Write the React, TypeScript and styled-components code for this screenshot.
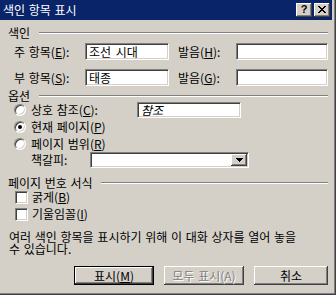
import React from "react";
import styled, { createGlobalStyle } from "styled-components";

const Global = createGlobalStyle`
  html, body { margin: 0; padding: 0; background: #d4d0c8; }
  body {
    font-family: "Noto Sans CJK KR", "Noto Sans", sans-serif;
    font-size: 12px;
    color: #000;
  }
`;

const Frame = styled.div`
  width: 336px;
  height: 295px;
  box-sizing: border-box;
  border-right: 1px solid #404040;
  border-bottom: 1px solid #404040;
  background: #d4d0c8;
`;

const Inner = styled.div`
  height: 100%;
  box-sizing: border-box;
  border-right: 1px solid #808080;
  border-bottom: 1px solid #808080;
  padding: 0 2px 2px 0;
  display: flex;
  flex-direction: column;
`;

const TitleBar = styled.div`
  height: 20px;
  flex: none;
  background: #0a246a;
  display: flex;
  align-items: center;
  padding: 0 2px 0 3px;
  color: #fff;
`;

const Title = styled.div`
  flex: 1;
  font-size: 12px;
  line-height: 14px;
  word-spacing: 1px;
`;

const CapBtn = styled.div<{ $gap?: number }>`
  width: 16px;
  height: 14px;
  box-sizing: border-box;
  margin-left: ${(p) => p.$gap ?? 0}px;
  background: #d4d0c8;
  box-shadow: inset -1px -1px #404040, inset 1px 1px #fff, inset -2px -2px #808080;
  display: flex;
  align-items: center;
  justify-content: center;
  color: #000;
  font-family: "Liberation Sans", Arial, sans-serif;
  font-weight: bold;
  font-size: 11px;
  line-height: 11px;
  padding-bottom: 1px;
`;

const Body = styled.div`
  flex: 1;
  display: flex;
  flex-direction: column;
  padding: 0 4px 0 8px;
`;

const GroupHead = styled.div<{ $top: number; $h: number }>`
  display: flex;
  align-items: center;
  height: ${(p) => p.$h}px;
  margin-top: ${(p) => p.$top}px;
  line-height: 12px;
  word-spacing: 1px;
  white-space: nowrap;
`;

const GroupLine = styled.div<{ $gap: number }>`
  flex: 1;
  height: 0;
  margin-left: ${(p) => p.$gap}px;
  border-top: 1px solid #808080;
  border-bottom: 1px solid #fff;
`;

const FieldRow = styled.div<{ $top: number }>`
  display: flex;
  align-items: center;
  height: 17px;
  margin-top: ${(p) => p.$top}px;
  padding-left: 6px;
  white-space: nowrap;
`;

const Label = styled.div<{ $w: number; $ml?: number }>`
  width: ${(p) => p.$w}px;
  margin-left: ${(p) => p.$ml ?? 0}px;
  flex: none;
  line-height: 12px;
  word-spacing: 1px;
`;

const TextBox = styled.div<{ $w: number; $h?: number; $italic?: boolean }>`
  width: ${(p) => p.$w}px;
  height: ${(p) => p.$h ?? 17}px;
  flex: none;
  box-sizing: border-box;
  background: #fff;
  border: 1px solid;
  border-color: #808080 #fff #fff #808080;
  box-shadow: inset 1px 1px #404040, inset -1px -1px #d4d0c8;
  padding: 0 3px;
  display: flex;
  align-items: center;
  line-height: 12px;
  word-spacing: 2px;
  font-style: ${(p) => (p.$italic ? "italic" : "normal")};
`;

const OptRow = styled.div<{ $h: number; $pl?: number }>`
  display: flex;
  align-items: center;
  height: ${(p) => p.$h}px;
  padding-left: ${(p) => p.$pl ?? 6}px;
  white-space: nowrap;
`;

const Radio = styled.div<{ $on?: boolean }>`
  width: 12px;
  height: 12px;
  flex: none;
  box-sizing: border-box;
  border-radius: 50%;
  border: 1px solid;
  border-color: #808080 #fff #fff #808080;
  box-shadow: inset 1px 1px #404040, inset -1px -1px #d4d0c8;
  background: #fff;
  display: flex;
  align-items: center;
  justify-content: center;
  &::after {
    content: "";
    display: ${(p) => (p.$on ? "block" : "none")};
    width: 4px;
    height: 4px;
    border-radius: 50%;
    background: #000;
  }
`;

const OptText = styled.div<{ $w?: number }>`
  margin-left: 5px;
  line-height: 12px;
  word-spacing: 1px;
  ${(p) => (p.$w ? `width: ${p.$w}px; flex: none;` : "")}
`;

const Combo = styled.div`
  width: 159px;
  height: 16px;
  box-sizing: border-box;
  background: #fff;
  border: 1px solid;
  border-color: #808080 #fff #fff #808080;
  box-shadow: inset 1px 1px #404040, inset -1px -1px #d4d0c8;
  display: flex;
  justify-content: flex-end;
  padding: 1px;
`;

const ComboBtn = styled.div`
  width: 16px;
  height: 12px;
  box-sizing: border-box;
  background: #d4d0c8;
  box-shadow: inset -1px -1px #404040, inset 1px 1px #fff, inset -2px -2px #808080;
  display: flex;
  align-items: center;
  justify-content: center;
`;

const CheckRow = styled.div<{ $top: number }>`
  display: flex;
  align-items: center;
  height: 14px;
  margin-top: ${(p) => p.$top}px;
  padding-left: 7px;
  white-space: nowrap;
`;

const CheckBox = styled.div`
  width: 13px;
  height: 13px;
  flex: none;
  box-sizing: border-box;
  background: #fff;
  border: 1px solid;
  border-color: #808080 #fff #fff #808080;
  box-shadow: inset 1px 1px #404040, inset -1px -1px #d4d0c8;
`;

const CheckText = styled.div`
  margin-left: 4px;
  line-height: 12px;
`;

const Desc = styled.div`
  margin-top: 10px;
  padding-left: 1px;
  line-height: 12px;
  word-spacing: 1px;
  white-space: nowrap;
`;

const ButtonRow = styled.div`
  display: flex;
  justify-content: flex-end;
  gap: 10px;
  margin-top: 11px;
`;

const Button = styled.div<{ $w: number; $default?: boolean; $disabled?: boolean }>`
  width: ${(p) => p.$w}px;
  height: 19px;
  box-sizing: border-box;
  background: #d4d0c8;
  display: flex;
  align-items: center;
  justify-content: center;
  line-height: 12px;
  word-spacing: 1px;
  border: ${(p) => (p.$default ? "1px solid #000" : "none")};
  box-shadow: ${(p) =>
    p.$default
      ? "inset -1px -1px #404040, inset 1px 1px #fff, inset -2px -2px #808080"
      : "inset -1px -1px #404040, inset 1px 1px #fff, inset -2px -2px #808080"};
  color: ${(p) => (p.$disabled ? "#808080" : "#000")};
  text-shadow: ${(p) => (p.$disabled ? "1px 1px 0 #fff" : "none")};
`;

const Mn = styled.span`
  text-decoration: underline;
  text-decoration-thickness: 1px;
  text-underline-offset: 1px;
`;

export default function App() {
  return (
    <>
      <Global />
      <Frame>
        <Inner>
          <TitleBar>
            <Title>색인 항목 표시</Title>
            <CapBtn>?</CapBtn>
            <CapBtn $gap={2}>
              <svg width="8" height="7" viewBox="0 0 8 7" shapeRendering="crispEdges">
                <path
                  d="M0 0h2v1h-2zM6 0h2v1h-2zM1 1h2v1h-2zM5 1h2v1h-2zM2 2h4v1h-4zM3 3h2v1h-2zM2 4h4v1h-4zM1 5h2v1h-2zM5 5h2v1h-2zM0 6h2v1h-2zM6 6h2v1h-2z"
                  fill="#000"
                />
              </svg>
            </CapBtn>
          </TitleBar>
          <Body>
            <GroupHead $top={6} $h={14}>
              색인
              <GroupLine $gap={9} />
            </GroupHead>
            <FieldRow $top={3}>
              <Label $w={71}>
                주 항목(<Mn>E</Mn>):
              </Label>
              <TextBox $w={84}>조선 시대</TextBox>
              <Label $w={58} $ml={9}>
                발음(<Mn>H</Mn>):
              </Label>
              <TextBox $w={92} />
            </FieldRow>
            <FieldRow $top={9}>
              <Label $w={71}>
                부 항목(<Mn>S</Mn>):
              </Label>
              <TextBox $w={84}>태종</TextBox>
              <Label $w={58} $ml={9}>
                발음(<Mn>G</Mn>):
              </Label>
              <TextBox $w={92} />
            </FieldRow>

            <GroupHead $top={4} $h={12}>
              옵션
              <GroupLine $gap={9} />
            </GroupHead>
            <OptRow $h={16}>
              <Radio />
              <OptText $w={106}>
                상호 참조(<Mn>C</Mn>):
              </OptText>
              <TextBox $w={104} $h={16} $italic>
                참조
              </TextBox>
            </OptRow>
            <OptRow $h={17}>
              <Radio $on />
              <OptText>
                현재 페이지(<Mn>P</Mn>)
              </OptText>
            </OptRow>
            <OptRow $h={17}>
              <Radio />
              <OptText>
                페이지 범위(<Mn>R</Mn>)
              </OptText>
            </OptRow>
            <OptRow $h={16} $pl={23}>
              <Label $w={59}>책갈피:</Label>
              <Combo>
                <ComboBtn>
                  <svg width="7" height="4" viewBox="0 0 7 4" shapeRendering="crispEdges">
                    <path d="M0 0h7v1h-7zM1 1h5v1h-5zM2 2h3v1h-3zM3 3h1v1h-1z" fill="#000" />
                  </svg>
                </ComboBtn>
              </Combo>
            </OptRow>

            <GroupHead $top={9} $h={12}>
              페이지 번호 서식
              <GroupLine $gap={8} />
            </GroupHead>
            <CheckRow $top={1}>
              <CheckBox />
              <CheckText>
                굵게(<Mn>B</Mn>)
              </CheckText>
            </CheckRow>
            <CheckRow $top={3}>
              <CheckBox />
              <CheckText>
                기울임꼴(<Mn>I</Mn>)
              </CheckText>
            </CheckRow>

            <Desc>
              여러 색인 항목을 표시하기 위해 이 대화 상자를 열어 놓을
              <br />수 있습니다.
            </Desc>

            <ButtonRow>
              <Button $w={80} $default>
                표시(<Mn>M</Mn>)
              </Button>
              <Button $w={80} $disabled>
                모두 표시(A)
              </Button>
              <Button $w={74}>취소</Button>
            </ButtonRow>
          </Body>
        </Inner>
      </Frame>
    </>
  );
}
